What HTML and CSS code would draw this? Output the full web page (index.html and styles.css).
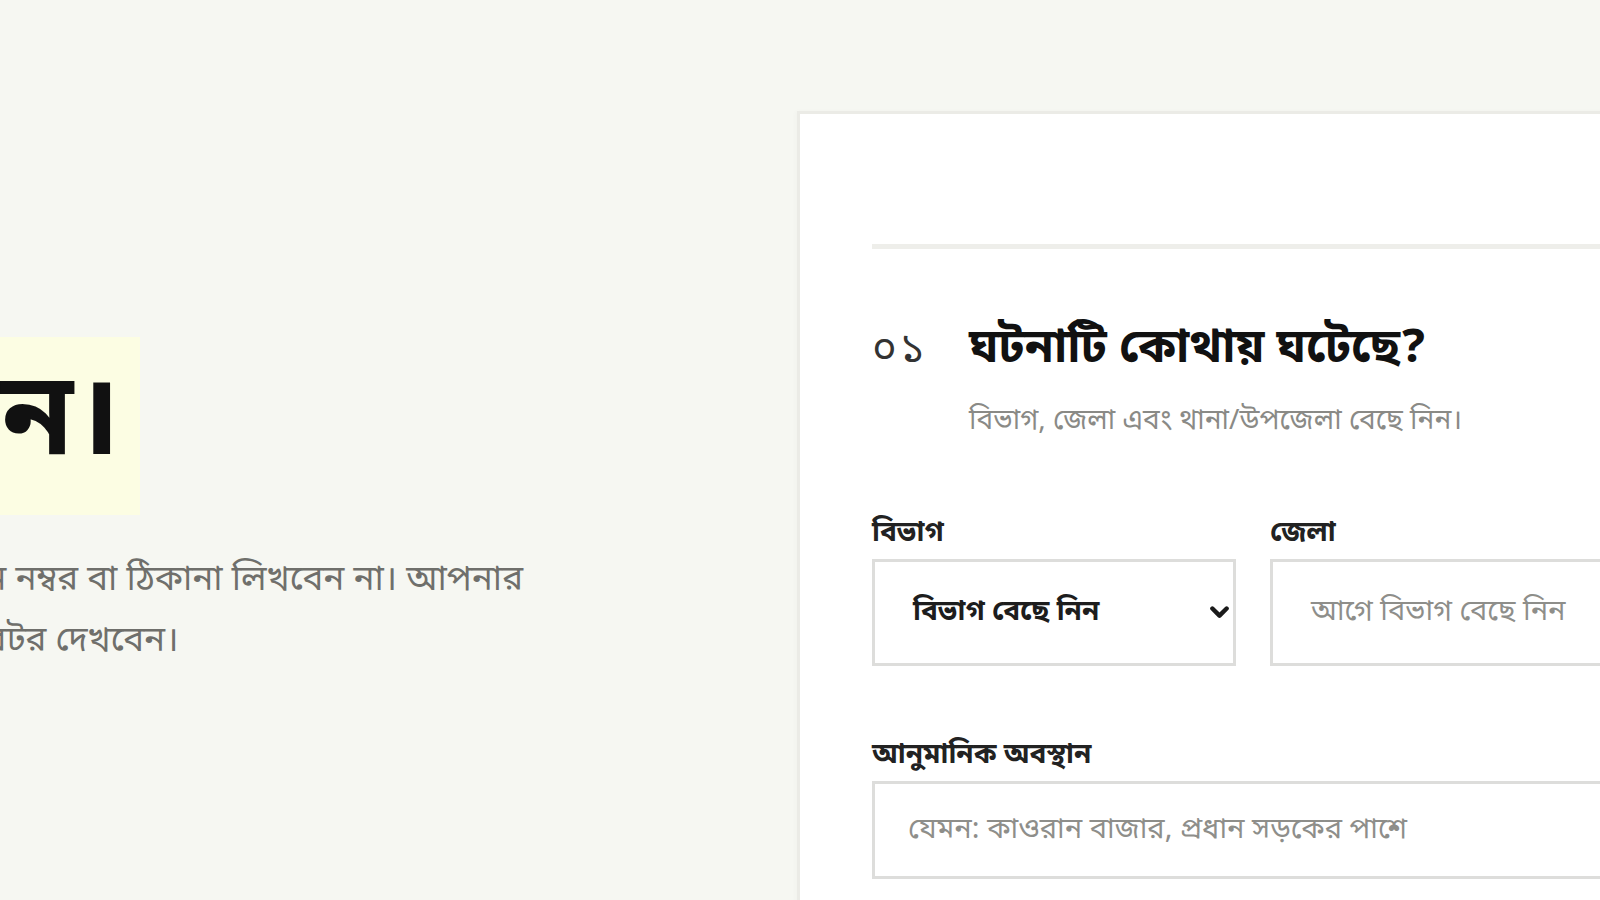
FILE: index.html
```html
<!DOCTYPE html>
<html lang="bn">
<head>
<meta charset="utf-8">
<title>ঘটনা রিপোর্ট</title>
<link rel="stylesheet" href="styles.css">
</head>
<body>
<main class="page">
  <section class="intro">
    <h1 class="intro-title"><mark class="hl">সচেতন।</mark></h1>
    <p class="intro-text">নাম, মোবাইল ফোন নম্বর বা ঠিকানা লিখবেন না। আপনার<br>পরিচয় শুধুই মডারেটর দেখবেন।</p>
  </section>
  <section class="card">
    <div class="progress"></div>
    <div class="step">
      <span class="step-no">০১</span>
      <div class="step-head">
        <h2 class="step-title">ঘটনাটি কোথায় ঘটেছে?</h2>
        <p class="step-sub">বিভাগ, জেলা এবং থানা/উপজেলা বেছে নিন।</p>
      </div>
    </div>
    <div class="grid">
      <div class="field">
        <label class="label">বিভাগ</label>
        <div class="box select">
          <span class="value">বিভাগ বেছে নিন</span>
          <svg class="chev" viewBox="0 0 12 8" width="19" height="13"><path d="M1.5 1.5 L6 6 L10.5 1.5" fill="none" stroke="#1a1a1a" stroke-width="2.8" stroke-linecap="round" stroke-linejoin="round"/></svg>
        </div>
      </div>
      <div class="field">
        <label class="label">জেলা</label>
        <div class="box"><span class="ph">আগে বিভাগ বেছে নিন</span></div>
      </div>
      <div class="field wide">
        <label class="label">আনুমানিক অবস্থান</label>
        <div class="box tall"><span class="ph">যেমন: কাওরান বাজার, প্রধান সড়কের পাশে</span></div>
      </div>
    </div>
  </section>
</main>
</body>
</html>
```

FILE: styles.css
```css
html, body {
  margin: 0;
  padding: 0;
  height: 900px;
  overflow: hidden;
  background: #f6f7f2;
  font-family: "Noto Sans Bengali", "Lohit Bengali", "Noto Sans", sans-serif;
  color: #1a1a1a;
}

.page {
  display: flex;
  align-items: flex-start;
  height: 900px;
}

.intro {
  flex: 0 0 900px;
  margin-left: -263px;
  margin-right: 160px;
  padding-top: 337px;
}

.intro-title {
  margin: 0;
  font-size: 115px;
  font-weight: 700;
  line-height: 1;
}

.hl {
  display: inline-block;
  background: #fcfde3;
  color: #111;
  line-height: 1.3;
  padding: 14px 20px 14px 0;
}

.intro-text {
  margin: 36px 0 0;
  font-size: 35px;
  line-height: 61px;
  color: #6f6f6b;
  white-space: nowrap;
}

.card {
  flex: 0 0 auto;
  width: 900px;
  margin-top: 111px;
  min-height: 900px;
  background: #fff;
  border: 3px solid #ebebe6;
  border-right: none;
  box-shadow: -2px 0 4px rgba(0, 0, 0, 0.02);
  padding: 130px 0 0 72px;
  box-sizing: border-box;
}

.progress {
  height: 5px;
  background: #eeeeea;
}

.step {
  display: flex;
  align-items: baseline;
  gap: 40px;
  margin-top: 70px;
}

.step-no {
  font-size: 42px;
  color: #333;
  width: 57px;
  letter-spacing: 3px;
}

.step-title {
  margin: 0;
  font-size: 47px;
  font-weight: 700;
  color: #111;
  line-height: 62px;
}

.step-sub {
  margin: 21px 0 0;
  font-size: 28px;
  color: #8a8a86;
  line-height: 40px;
}

.grid {
  display: grid;
  grid-template-columns: 364px 364px;
  column-gap: 34px;
  row-gap: 71px;
  margin-top: 73px;
}

.wide {
  grid-column: 1 / -1;
}

.field {
  display: flex;
  flex-direction: column;
}

.label {
  font-size: 28px;
  font-weight: 700;
  color: #222;
  line-height: 38px;
  margin-bottom: 6px;
}

.box {
  height: 107px;
  border: 3px solid #dddddb;
  box-sizing: border-box;
  display: flex;
  align-items: center;
  padding: 0 4px 0 38px;
  background: #fff;
}

.tall {
  height: 98px;
  padding-left: 33px;
}

.select {
  justify-content: space-between;
}

.value {
  font-size: 28px;
  font-weight: 700;
  color: #1d1d1d;
}

.ph {
  font-size: 29px;
  color: #8e8e8a;
}

.chev {
  display: block;
}
```
